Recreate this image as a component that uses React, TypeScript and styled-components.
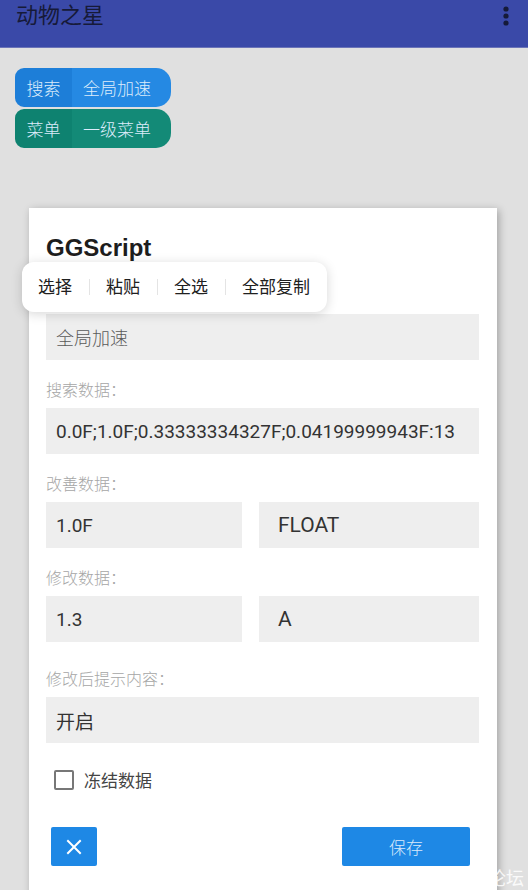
import React from "react";
import styled, { createGlobalStyle } from "styled-components";

const CJK = `Roboto, "Noto Sans CJK SC", sans-serif`;

const GlobalStyle = createGlobalStyle`
  html, body {
    margin: 0;
    padding: 0;
    background: #e0e0e0;
    font-family: ${CJK};
  }
`;

const Page = styled.div`
  position: relative;
  width: 528px;
  height: 890px;
  overflow: hidden;
  background: #e0e0e0;
`;

const AppBar = styled.div`
  height: 48px;
  box-sizing: border-box;
  display: flex;
  align-items: flex-start;
  justify-content: space-between;
  padding: 3px 18px 0 16px;
  background: #3a49a8;
  border-bottom: 1px solid #6b74b8;
`;

const AppTitle = styled.div`
  font-size: 22px;
  line-height: 26px;
  color: #161a38;
`;

const Chips = styled.div`
  display: flex;
  flex-direction: column;
  gap: 2px;
  padding: 20px 15px 0;
`;

const Chip = styled.div`
  display: flex;
  width: 156px;
  height: 39px;
  border-radius: 9px 15px 15px 9px;
  overflow: hidden;
  font-size: 17px;
  font-weight: 300;
  color: #dcecfb;
`;

const ChipKey = styled.div<{ $bg: string }>`
  display: flex;
  align-items: center;
  justify-content: center;
  width: 57px;
  background: ${({ $bg }) => $bg};
`;

const ChipValue = styled.div<{ $bg: string }>`
  flex: 1;
  display: flex;
  align-items: center;
  padding-left: 11px;
  background: ${({ $bg }) => $bg};
`;

const Card = styled.div`
  position: relative;
  width: 468px;
  height: 700px;
  margin: 60px 0 0 29px;
  box-sizing: border-box;
  padding: 24px 18px 0 17px;
  background: #fff;
  box-shadow: 2px 2px 8px rgba(0, 0, 0, 0.28);
`;

const CardTitle = styled.div`
  margin-bottom: 50px;
  font-family: "Liberation Sans", Arial, sans-serif;
  font-weight: 700;
  font-size: 24px;
  line-height: 32px;
  color: #1d1d1d;
`;

const PopupMenu = styled.div`
  position: absolute;
  left: -7px;
  top: 54px;
  z-index: 2;
  display: flex;
  align-items: center;
  height: 50px;
  background: #fff;
  border-radius: 12px;
  box-shadow: 0 2px 12px rgba(0, 0, 0, 0.16);
`;

const MenuItem = styled.div`
  padding: 0 17px 0 16px;
  font-size: 17px;
  color: #202020;
  line-height: 24px;
`;

const MenuDivider = styled.div`
  width: 1px;
  height: 16px;
  background: #e4e4e4;
`;

const Label = styled.div<{ $gap?: number }>`
  margin: ${({ $gap = 21 }) => $gap}px 0 7px;
  font-size: 16px;
  line-height: 20px;
  font-weight: 300;
  color: #a6a6a6;
`;

const Row = styled.div`
  display: flex;
  gap: 17px;
`;

const Input = styled.div<{ $w?: number; $pad?: number; $size?: number; $dim?: boolean }>`
  flex: ${({ $w }) => ($w ? `0 0 ${$w}px` : "1 1 0")};
  box-sizing: border-box;
  height: 46px;
  display: flex;
  align-items: center;
  padding-left: ${({ $pad = 10 }) => $pad}px;
  background: #eeeeee;
  font-size: ${({ $size = 19 }) => $size}px;
  font-weight: ${({ $dim }) => ($dim ? 300 : 400)};
  color: ${({ $dim }) => ($dim ? "#5a5a5a" : "#333")};
  white-space: nowrap;
  overflow: hidden;
`;

const CheckRow = styled.label`
  display: flex;
  align-items: center;
  gap: 10px;
  margin: 24px 0 0 8px;
  font-size: 17px;
  color: #444;
`;

const Box = styled.span`
  width: 20px;
  height: 20px;
  box-sizing: border-box;
  border: 2px solid #777;
  border-radius: 2px;
`;

const Actions = styled.div`
  display: flex;
  justify-content: space-between;
  margin-top: 35px;
  padding: 0 9px 0 5px;
`;

const Button = styled.button<{ $wide?: boolean }>`
  width: ${({ $wide }) => ($wide ? 128 : 46)}px;
  height: 39px;
  display: flex;
  align-items: center;
  justify-content: center;
  border: none;
  border-radius: 2px;
  background: #1e88e5;
  font-family: ${CJK};
  font-size: 17px;
  font-weight: 300;
  color: #dbeafb;
  padding: 0;
`;

const Watermark = styled.div`
  position: absolute;
  left: 488px;
  top: 864px;
  font-size: 18px;
  color: rgba(255, 255, 255, 0.85);
`;

const MoreIcon = () => (
  <svg width="8" height="26" viewBox="0 0 8 26">
    <circle cx="4" cy="6" r="2.6" fill="#151a38" />
    <circle cx="4" cy="13" r="2.6" fill="#151a38" />
    <circle cx="4" cy="20" r="2.6" fill="#151a38" />
  </svg>
);

const CloseIcon = () => (
  <svg width="16" height="16" viewBox="0 0 16 16">
    <path d="M2 2 L14 14 M14 2 L2 14" stroke="#fff" strokeWidth="2" strokeLinecap="square" />
  </svg>
);

const menu = ["选择", "粘贴", "全选", "全部复制"];

export default function App() {
  return (
    <Page>
      <GlobalStyle />
      <AppBar>
        <AppTitle>动物之星</AppTitle>
        <MoreIcon />
      </AppBar>

      <Chips>
        <Chip>
          <ChipKey $bg="#1d7ed8">搜索</ChipKey>
          <ChipValue $bg="#2589e3">全局加速</ChipValue>
        </Chip>
        <Chip>
          <ChipKey $bg="#0e8270">菜单</ChipKey>
          <ChipValue $bg="#138a77">一级菜单</ChipValue>
        </Chip>
      </Chips>

      <Card>
        <CardTitle>GGScript</CardTitle>
        <PopupMenu>
          {menu.map((m, i) => (
            <React.Fragment key={m}>
              {i > 0 && <MenuDivider />}
              <MenuItem>{m}</MenuItem>
            </React.Fragment>
          ))}
        </PopupMenu>

        <Input $dim $size={18}>全局加速</Input>

        <Label>搜索数据：</Label>
        <Input>0.0F;1.0F;0.33333334327F;0.04199999943F:13</Input>

        <Label>改善数据：</Label>
        <Row>
          <Input $w={196}>1.0F</Input>
          <Input $pad={19} $size={21}>FLOAT</Input>
        </Row>

        <Label>修改数据：</Label>
        <Row>
          <Input $w={196}>1.3</Input>
          <Input $pad={19} $size={21}>A</Input>
        </Row>

        <Label $gap={28}>修改后提示内容：</Label>
        <Input>开启</Input>

        <CheckRow>
          <Box />
          冻结数据
        </CheckRow>

        <Actions>
          <Button>
            <CloseIcon />
          </Button>
          <Button $wide>保存</Button>
        </Actions>
      </Card>
      <Watermark>论坛</Watermark>
    </Page>
  );
}
